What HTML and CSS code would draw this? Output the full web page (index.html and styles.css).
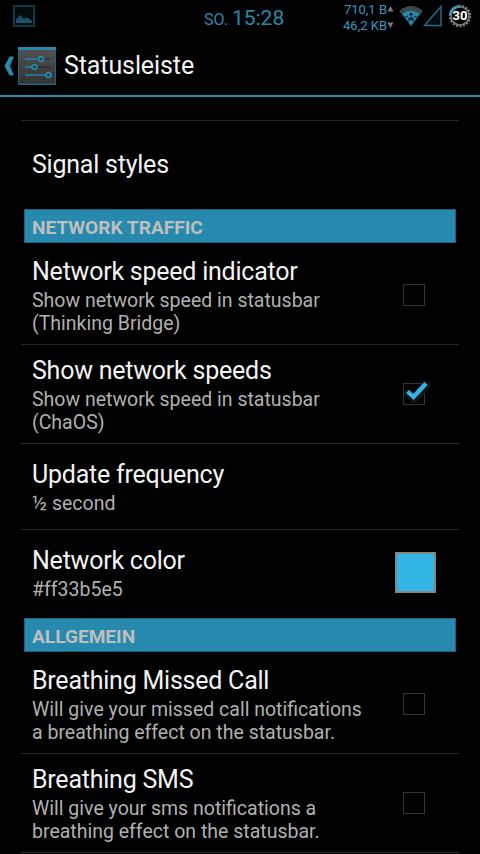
FILE: index.html
```
<!DOCTYPE html>
<html lang="de">
<head>
<meta charset="utf-8">
<title>Statusleiste</title>
<link rel="stylesheet" href="styles.css">
</head>
<body>
<div class="statusbar">
  <svg class="picture" width="22" height="22" viewBox="0 0 22 22"><rect x="1" y="1" width="20" height="20" fill="#020a0e" stroke="#174456" stroke-width="1.6"/><path d="M3 18v-4l2-1 2-3 4 4 3-2 5 4v2z" fill="#1b5167"/></svg>
  <div class="clock"><span class="day">SO.</span> <span class="time">15:28</span></div>
  <div class="speeds"><div>710,1 B</div><div>46,2 KB</div></div>
  <svg class="arrows" width="7" height="24" viewBox="0 0 7 24"><path d="M3.500 0 6.500 5.500h-6zM3.500 22l3-5.500h-6z" fill="#777"/></svg>
  <svg class="wifi" width="26" height="22" viewBox="0 0 26 22"><path d="M1 6Q13-4 25 6L22 9.500Q13 2.500 4 9.500z" fill="#3d4649"/><path d="M4 9Q13 2 22 9L13 21z" fill="#2789ae"/><path d="M6.500 12.500L10 11M16 11l3.500 1.500M9 16.500l2.500-1M14.500 15.500l2.500 1" fill="none" stroke="#10242d" stroke-width="1.200"/><path d="M13 7.500l2 2-2 1.500-2-1.500zM13 11.500l3.500 2.500-3.500 1.500-3.500-1.500z" fill="#10242d"/></svg>
  <svg class="signal" width="20" height="22" viewBox="0 0 20 22"><path d="M1.500 20.500H18V1.500z" fill="#020a0e" stroke="#23708d" stroke-width="1.400"/></svg>
  <div class="battery">
    <svg width="24" height="24" viewBox="0 0 24 24"><circle cx="12" cy="12" r="10.200" fill="none" stroke="#777" stroke-width="2.200" stroke-dasharray="2.200 1.360"/><circle cx="12" cy="12" r="9" fill="none" stroke="#777" stroke-width="1.600"/><path d="M2.200 11A9.800 9.800 0 0 1 12 2.200" fill="none" stroke="#2c9bc5" stroke-width="2.600" stroke-dasharray="3 .8"/></svg>
    <span>30</span>
  </div>
</div>
<header class="header">
  <svg class="back" width="11" height="20" viewBox="0 0 11 20"><path d="M5.500 0.500H10L6 10l4 9.500H5.500L0.500 10z" fill="#2789ae"/></svg>
  <svg class="app" width="38" height="38" viewBox="0 0 38 38"><defs><linearGradient id="g" x2="0" y2="1"><stop stop-color="#505050"/><stop offset="1" stop-color="#333"/></linearGradient></defs><rect width="38" height="38" rx="1" fill="#1c6684"/><rect x="1" y="3" width="36" height="33.500" fill="url(#g)"/><path d="M0 0H38V3H0z" fill="#2789ae"/><path d="M7 12H32M7 20H32M7 28H32" stroke="#222" stroke-width="1.200"/><path d="M7 12H21M7 20H14M7 28H28" stroke="#2789ae" stroke-width="1.600"/><g fill="#293b43" stroke="#2789ae" stroke-width="1.700"><circle cx="23" cy="12" r="2.400"/><circle cx="16.500" cy="20" r="2.400"/><circle cx="30.500" cy="28" r="2.400"/></g></svg>
  <h1>Statusleiste</h1>
</header>
<main class="list">
  <div class="row single"><div class="title">Signal styles</div></div>
  <h2 class="section">NETWORK TRAFFIC</h2>
  <div class="row first"><div class="text"><div class="title">Network speed indicator</div><div class="summary">Show network speed in statusbar<br>(Thinking Bridge)</div></div><span class="box"></span></div>
  <div class="row"><div class="text"><div class="title">Show network speeds</div><div class="summary">Show network speed in statusbar<br>(ChaOS)</div></div><span class="box"><svg class="check" width="30" height="26" viewBox="0 0 30 26"><path d="M6.500 12.500l5.500 5L24 4" fill="none" stroke="#151515" stroke-width="9" stroke-linecap="round" stroke-linejoin="round"/><path d="M5.500 10.500l6 5.500L24 2.500" fill="none" stroke="#33b5e5" stroke-width="4.400"/></svg></span></div>
  <div class="row short"><div class="text"><div class="title">Update frequency</div><div class="summary">½ second</div></div></div>
  <div class="row short last"><div class="text"><div class="title">Network color</div><div class="summary">#ff33b5e5</div></div><span class="swatch"></span></div>
  <h2 class="section">ALLGEMEIN</h2>
  <div class="row first"><div class="text"><div class="title">Breathing Missed Call</div><div class="summary">Will give your missed call notifications<br>a breathing effect on the statusbar.</div></div><span class="box"></span></div>
  <div class="row"><div class="text"><div class="title">Breathing SMS</div><div class="summary">Will give your sms notifications a<br>breathing effect on the statusbar.</div></div><span class="box"></span></div>
</main>
</body>
</html>
```
FILE: styles.css
```
* { box-sizing: border-box; }
body { margin: 0; width: 480px; height: 854px; overflow: hidden; background: #000; color: #f3f3f3; font-family: Roboto, sans-serif; }
svg { display: block; flex: none; }
.statusbar { height: 36px; display: flex; align-items: flex-start; color: #2789ae; }
.picture { margin: 5px 0 0 13px; }
.clock { margin-left: 169px; width: 82px; white-space: nowrap; line-height: 36px; }
.day { font-size: 16px; }
.time { font-size: 21px; }
.speeds { width: 101px; padding-top: 2px; text-align: right; font-size: 13px; line-height: 16px; color: #2c9bc5; }
.arrows { margin: 6px 0 0; }
.wifi { margin: 5px 0 0 4px; }
.signal { margin: 5px 0 0 -1px; }
.battery { position: relative; margin: 4px 0 0 5px; width: 24px; height: 24px; }
.battery span { position: absolute; inset: 0; text-align: center; line-height: 23px; font-size: 13px; font-weight: 700; color: #fff; }
.header { height: 61px; border-bottom: 2px solid #2789ae; display: flex; align-items: center; }
.back { margin-left: 4px; }
.app { margin-left: 3px; }
h1 { margin: 0 0 0 8px; font-size: 25px; letter-spacing: -0.1px; font-weight: 400; line-height: 29px; }
.list { padding: 23px 21px 0; }
.row { height: 99px; padding: 11px 0 0 11px; display: flex; justify-content: space-between; border-bottom: 1px solid #282828; }
.single { height: 89px; padding-top: 29px; border-top: 1px solid #282828; border-bottom: 0; }
.first { height: 102px; padding-top: 14px; }
.short { height: 86px; padding-top: 16px; }
.last { height: 88px; border-bottom: 0; }
.title { font-size: 25px; letter-spacing: -0.23px; line-height: 29px; white-space: nowrap; }
.summary { margin-top: 3px; font-size: 19.5px; line-height: 23px; color: #b0b0b0; white-space: nowrap; }
.section { margin: 0 3px; height: 34px; padding-left: 7px; border: 1px solid #1c617b; background: #2789ae; color: #bebebe; font-size: 19.1px; line-height: 35px; font-weight: 700; }
.box { position: relative; flex: none; width: 22px; height: 22px; margin: 27px 34px 0 0; border: 1px solid #353535; }
.check { position: absolute; left: -2px; top: -3px; }
.swatch { width: 41px; height: 41px; margin: 6px 23px 0 0; border: 2px solid #858585; background: #33b5e5; }
```
